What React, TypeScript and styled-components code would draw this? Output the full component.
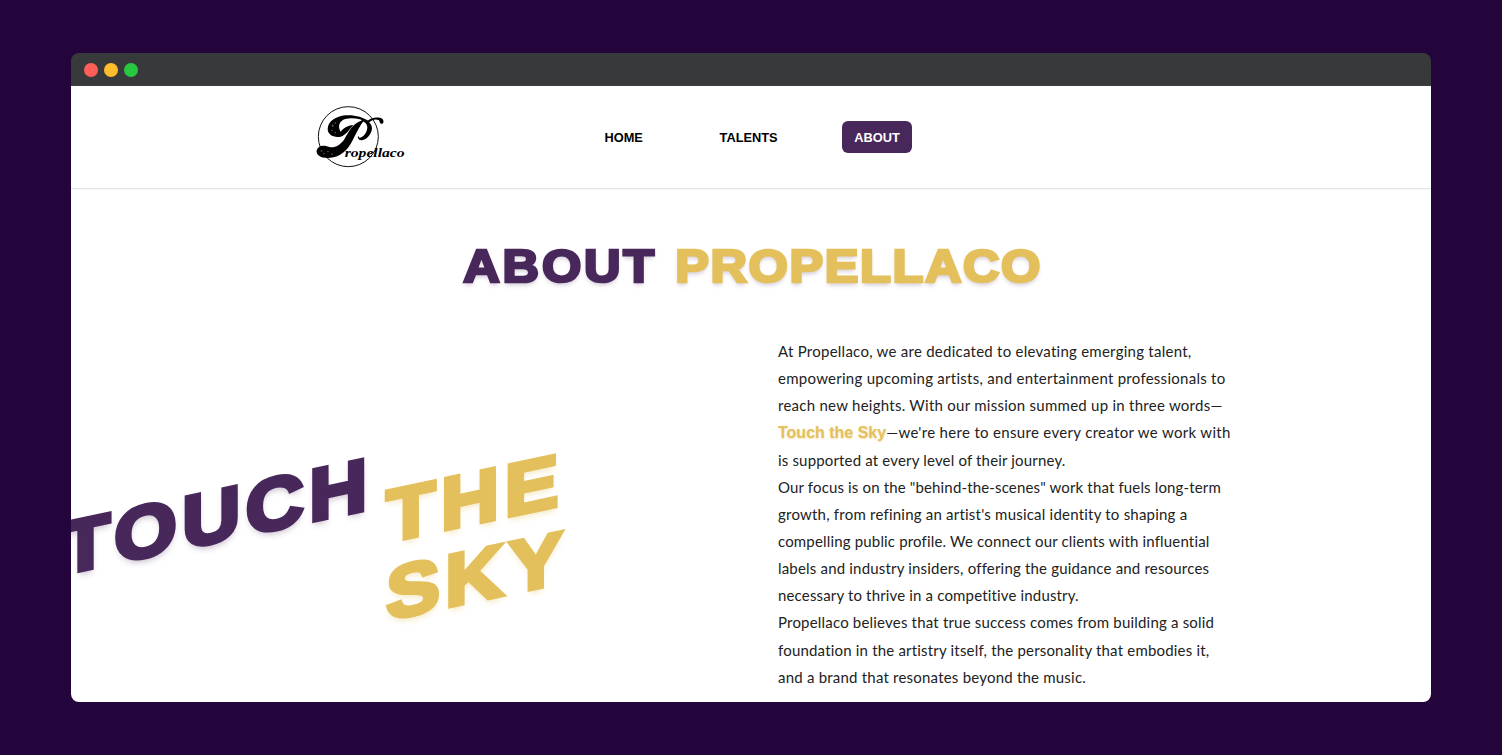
import React from "react";
import styled, { createGlobalStyle } from "styled-components";

const plum = "#48285a";
const gold = "#e4c05c";

const GlobalStyle = createGlobalStyle`
  * { box-sizing: border-box; }
  body { margin: 0; background: #23053c; }
`;

const Desktop = styled.div`
  height: 755px;
  padding: 53px 71px;
  overflow: hidden;
`;

const Window = styled.div`
  height: 649px;
  border-radius: 8px;
  overflow: hidden;
`;

const TitleBar = styled.div`
  display: flex;
  align-items: center;
  gap: 6px;
  height: 33px;
  padding: 2px 13px 0;
  background: #38393a;
  border-bottom: 1px solid #344246;
`;

const Light = styled.span<{ $color: string }>`
  width: 14px;
  height: 14px;
  border-radius: 50%;
  background: ${(p) => p.$color};
`;

const Page = styled.div`
  height: 616px;
  overflow: hidden;
  background: #fff;
`;

const Header = styled.header`
  display: flex;
  align-items: center;
  height: 103px;
  padding-left: 229px;
  border-bottom: 1px solid #e4e4e4;
  box-shadow: 0 1px 2px rgba(0, 0, 0, 0.04);
`;

const Logo = styled.svg`
  width: 120px;
  height: 80px;
  margin-top: -5px;
`;

const Nav = styled.nav`
  display: flex;
  align-items: center;
  margin-left: 172px;
  gap: 51.7px;
`;

const NavLink = styled.a<{ $active?: boolean }>`
  height: 32px;
  padding: 0 12.5px;
  border-radius: 6px;
  font: bold 12.8px/33px "Liberation Sans", Arial, sans-serif;
  color: ${(p) => (p.$active ? "#fff" : "#000")};
  background: ${(p) => (p.$active ? plum : "transparent")};
`;

const Title = styled.h1`
  display: flex;
  justify-content: center;
  gap: 16.5px;
  margin: 50px 0 0;
  padding-left: 3px;
  font: bold 46px/54px "Liberation Sans", Arial, sans-serif;
  text-shadow: 0 3px 4px rgba(72, 40, 90, 0.25);
  transform: scaleX(1.1);
`;

const Word = styled.span<{ $color: string; $spacing: number; $stroke: number }>`
  color: ${(p) => p.$color};
  letter-spacing: ${(p) => p.$spacing}px;
  -webkit-text-stroke: ${(p) => p.$stroke}px ${(p) => p.$color};
`;

const Columns = styled.div`
  display: grid;
  grid-template-columns: 707px 1fr;
  margin-top: 45px;
`;

const Slogan = styled.div`
  display: flex;
  align-items: flex-start;
  align-self: start;
  gap: 12px;
  margin: 174px 0 0 -10.5px;
  font: bold 72px/75.7px "Liberation Sans", Arial, sans-serif;
  transform-origin: 0 37.85px;
  transform: rotate(-12deg) skewX(-12deg) scaleX(1.14);
`;

const Stack = styled.div`
  display: flex;
  flex-direction: column;
  margin-top: 36.2px;
`;

const Shadowed = styled(Word)`
  text-shadow: 0 4px 6px ${(p) => (p.$color === plum ? "rgba(72, 40, 90, 0.3)" : "rgba(228, 192, 92, 0.4)")};
`;

const Copy = styled.div`
  font: 15px/27.15px Lato, sans-serif;
  color: #222;
  white-space: nowrap;
`;

const Line = styled.div<{ $spacing: number }>`
  height: 27.15px;
  letter-spacing: ${(p) => p.$spacing}px;
`;

const Accent = styled.strong`
  font: bold 16px/20px "Liberation Sans", Arial, sans-serif;
  letter-spacing: 0;
  color: ${gold};
  text-shadow: 0 1px 2px rgba(228, 192, 92, 0.5);
`;

const lines: { text: string; spacing: number; accent?: string }[] = [
  { text: "At Propellaco, we are dedicated to elevating emerging talent,", spacing: 0.254 },
  { text: "empowering upcoming artists, and entertainment professionals to", spacing: 0.27 },
  { text: "reach new heights. With our mission summed up in three words—", spacing: 0.26 },
  { accent: "Touch the Sky", text: "—we're here to ensure every creator we work with", spacing: 0.32 },
  { text: "is supported at every level of their journey.", spacing: 0.17 },
  { text: 'Our focus is on the "behind-the-scenes" work that fuels long-term', spacing: 0.15 },
  { text: "growth, from refining an artist's musical identity to shaping a", spacing: 0.216 },
  { text: "compelling public profile. We connect our clients with influential", spacing: 0.167 },
  { text: "labels and industry insiders, offering the guidance and resources", spacing: 0.187 },
  { text: "necessary to thrive in a competitive industry.", spacing: 0.16 },
  { text: "Propellaco believes that true success comes from building a solid", spacing: 0.192 },
  { text: "foundation in the artistry itself, the personality that embodies it,", spacing: 0.19 },
  { text: "and a brand that resonates beyond the music.", spacing: 0.213 },
];

function PropellacoLogo() {
  return (
    <Logo viewBox="0 0 360 240" role="img" aria-label="Propellaco">
      <circle cx="145" cy="125" r="90" fill="none" stroke="#111" strokeWidth="3" />
      <path
        d="M122 125 C100 129 83 118 83 102 C84 78 108 64 136 61 C164 59 188 66 206 78 L203 82 C182 71 156 67 136 72 C118 77 112 94 122 110 C130 100 142 92 160 90 C148 104 138 120 122 125 Z"
        fill="#000"
      />
      <path
        d="M184 72 C200 74 216 84 216 100 C215 118 200 134 186 136 C178 136 172 130 174 122 L178 128 C190 128 202 112 202 96 C201 86 194 80 184 78 Z"
        fill="#000"
      />
      <path
        d="M192 76 C180 92 170 112 158 136 C144 164 122 189 84 189 C60 189 48 180 50 166 C54 152 68 148 88 156 C104 160 120 150 132 134 C148 110 156 82 192 76 Z"
        fill="#000"
      />
      <path d="M200 80 C214 66 236 65 248 72 C253 80 250 88 243 86 C238 84 240 78 236 75 C226 71 214 74 206 84 Z" fill="#000" />
      <g fill="#777">
        <circle cx="98" cy="92" r="2.5" />
        <circle cx="106" cy="84" r="2" />
        <circle cx="96" cy="106" r="2" />
        <circle cx="106" cy="112" r="2" />
        <circle cx="64" cy="168" r="2" />
        <circle cx="72" cy="176" r="2" />
        <circle cx="84" cy="170" r="2" />
        <circle cx="96" cy="178" r="2" />
      </g>
      <text
        x="134"
        y="186"
        fontFamily="Liberation Serif, serif"
        fontStyle="italic"
        fontWeight="bold"
        fontSize="35"
        textLength="180"
        lengthAdjust="spacingAndGlyphs"
      >
        ropellaco
      </text>
    </Logo>
  );
}

export default function App() {
  return (
    <>
      <GlobalStyle />
      <Desktop>
        <Window>
          <TitleBar>
            <Light $color="#ff5f57" />
            <Light $color="#febc2e" />
            <Light $color="#28c840" />
          </TitleBar>
          <Page>
            <Header>
              <PropellacoLogo />
              <Nav>
                <NavLink>HOME</NavLink>
                <NavLink>TALENTS</NavLink>
                <NavLink $active>ABOUT</NavLink>
              </Nav>
            </Header>
            <Title>
              <Word $color={plum} $spacing={2.5} $stroke={2.7}>ABOUT</Word>
              <Word $color={gold} $spacing={1.4} $stroke={2.7}>PROPELLACO</Word>
            </Title>
            <Columns>
              <Slogan>
                <Shadowed $color={plum} $spacing={5} $stroke={4.3}>TOUCH</Shadowed>
                <Stack>
                  <Shadowed $color={gold} $spacing={5.2} $stroke={4.3}>THE</Shadowed>
                  <Shadowed $color={gold} $spacing={5} $stroke={4.3}>SKY</Shadowed>
                </Stack>
              </Slogan>
              <Copy>
                {lines.map((line) => (
                  <Line key={line.text} $spacing={line.spacing}>
                    {line.accent && <Accent>{line.accent}</Accent>}
                    {line.text}
                  </Line>
                ))}
              </Copy>
            </Columns>
          </Page>
        </Window>
      </Desktop>
    </>
  );
}
